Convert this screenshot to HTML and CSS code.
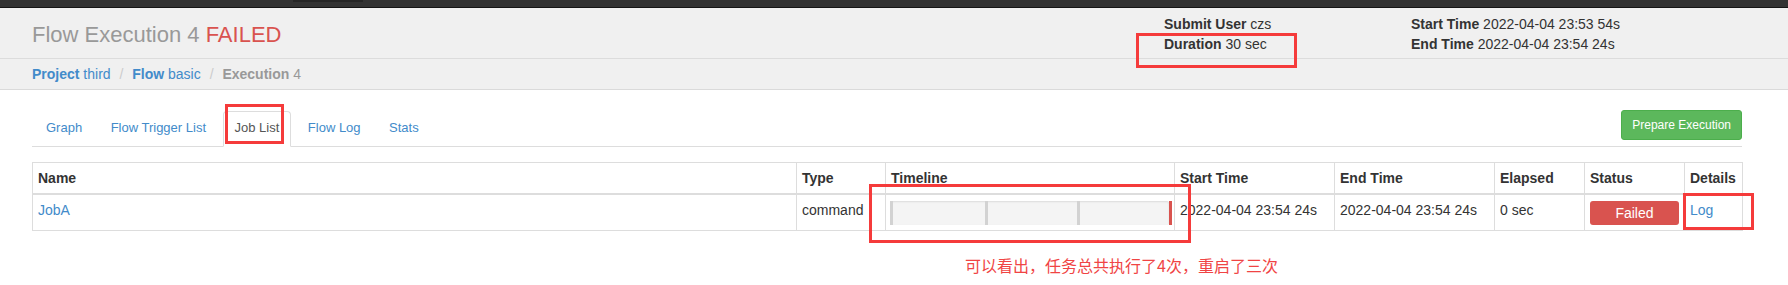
FILE: index.html
```html
<!DOCTYPE html>
<html lang="zh-CN">
<head>
<meta charset="utf-8">
<title>Flow Execution 4</title>
<link rel="stylesheet" href="styles.css">
</head>
<body>
<div class="topbar"><span class="topbar-tab"></span></div>
<header class="exec-header">
  <div class="exec-summary">
    <h1 class="exec-title">Flow Execution 4 <span class="status-failed">FAILED</span></h1>
    <div class="info-col info-col-user">
      <div><b>Submit User</b> czs</div>
      <div><b>Duration</b> 30 sec</div>
    </div>
    <div class="info-col info-col-time">
      <div><b>Start Time</b> 2022-04-04 23:53 54s</div>
      <div><b>End Time</b> 2022-04-04 23:54 24s</div>
    </div>
  </div>
  <div class="breadcrumb-bar">
    <ol class="breadcrumb">
      <li><a href="#"><b>Project</b> third</a></li>
      <li><a href="#"><b>Flow</b> basic</a></li>
      <li class="active"><b>Execution</b> 4</li>
    </ol>
  </div>
</header>
<main class="content">
  <div class="tab-row">
    <ul class="nav-tabs">
      <li><a href="#">Graph</a></li>
      <li><a href="#">Flow Trigger List</a></li>
      <li class="active"><a href="#">Job List</a></li>
      <li><a href="#">Flow Log</a></li>
      <li><a href="#">Stats</a></li>
    </ul>
    <button class="btn-success">Prepare Execution</button>
  </div>
  <table class="job-table">
    <colgroup>
      <col class="c-name"><col class="c-type"><col class="c-timeline"><col class="c-start"><col class="c-end"><col class="c-elapsed"><col class="c-status"><col class="c-details">
    </colgroup>
    <thead>
      <tr><th>Name</th><th>Type</th><th>Timeline</th><th>Start Time</th><th>End Time</th><th>Elapsed</th><th>Status</th><th>Details</th></tr>
    </thead>
    <tbody>
      <tr>
        <td><a href="#">JobA</a></td>
        <td>command</td>
        <td>
          <div class="timeline">
            <span class="attempt" style="left:0%"></span>
            <span class="attempt" style="left:34.2%"></span>
            <span class="attempt" style="left:67.1%"></span>
            <span class="attempt attempt-failed" style="left:100%"></span>
          </div>
        </td>
        <td>2022-04-04 23:54 24s</td>
        <td>2022-04-04 23:54 24s</td>
        <td>0 sec</td>
        <td><div class="label-failed">Failed</div></td>
        <td><a href="#">Log</a></td>
      </tr>
    </tbody>
  </table>
</main>
<div class="annotations">
  <div class="mark mark-duration"></div>
  <div class="mark mark-joblist"></div>
  <div class="mark mark-timeline"></div>
  <div class="mark mark-log"></div>
  <div class="note">可以看出，任务总共执行了4次，重启了三次</div>
</div>
</body>
</html>
```

FILE: styles.css
```css
* { box-sizing: border-box; }
html, body { margin: 0; padding: 0; }
body {
  position: relative;
  width: 1788px;
  height: 285px;
  overflow: hidden;
  background: #fff;
  color: #333;
  font-family: "Liberation Sans", Arial, sans-serif;
  font-size: 14px;
  line-height: 20px;
}
a { color: #428bca; text-decoration: none; }

.topbar {
  height: 8px;
  background: #333;
  border-bottom: 1px solid #151515;
  display: flex;
}
.topbar-tab {
  margin-left: 293px;
  width: 70px;
  height: 2px;
  background: #262626;
}

.exec-header {
  background: #f0f0f0;
  border-bottom: 1px solid #dadada;
}
.exec-summary {
  display: flex;
  align-items: flex-start;
  height: 51px;
  padding-left: 32px;
  border-bottom: 1px solid #dcdcdc;
}
.exec-title {
  flex: 1;
  margin: 15px 0 0;
  font-size: 22px;
  line-height: 24px;
  font-weight: normal;
  color: #999;
}
.status-failed { color: #d9534f; }
.info-col { margin-top: 6px; }
.info-col-user { width: 247px; }
.info-col-time { width: 377px; }

.breadcrumb-bar {
  height: 30px;
  padding: 5px 0 0 32px;
}
.breadcrumb {
  list-style: none;
  margin: 0;
  padding: 0;
}
.breadcrumb li { display: inline-block; }
.breadcrumb li + li::before {
  content: "/\00a0";
  padding: 0 5px;
  color: #ccc;
}
.breadcrumb .active { color: #999; }

.content { padding: 20px 46px 0 32px; }

.tab-row {
  display: flex;
  align-items: flex-start;
  border-bottom: 1px solid #ddd;
}
.nav-tabs {
  display: flex;
  gap: 4.5px;
  list-style: none;
  margin: 1px 0 -1px 2px;
  padding: 0;
  font-size: 13px;
  line-height: 18px;
}
.nav-tabs li a {
  display: block;
  padding: 7px 11px 9px;
  border: 1px solid transparent;
  border-radius: 4px 4px 0 0;
}
.nav-tabs li.active a {
  color: #555;
  background: #fff;
  border-color: #ddd #ddd transparent;
}
.btn-success {
  margin-left: auto;
  height: 30px;
  padding: 5px 10px;
  font-family: inherit;
  font-size: 12px;
  line-height: 18px;
  color: #fff;
  background: #5cb85c;
  border: 1px solid #4cae4c;
  border-radius: 3px;
}

.job-table {
  width: 100%;
  margin-top: 15px;
  table-layout: fixed;
  border-collapse: collapse;
  border: 1px solid #ddd;
}
.c-name { width: 764px; }
.c-type { width: 89px; }
.c-timeline { width: 289px; }
.c-start { width: 160px; }
.c-end { width: 160px; }
.c-elapsed { width: 90px; }
.c-status { width: 100px; }
.c-details { width: 58px; }
.job-table th, .job-table td {
  padding: 5px;
  border: 1px solid #ddd;
  text-align: left;
  vertical-align: top;
  white-space: nowrap;
}
.job-table thead th { border-bottom: 2px solid #ddd; font-weight: bold; }

.timeline {
  position: relative;
  height: 24px;
  margin: 1px 0 0 -1px;
  background: #f4f4f4;
  border-radius: 2px;
  box-shadow: inset 0 1px 2px rgba(0, 0, 0, 0.1);
}
.attempt {
  position: absolute;
  top: 0;
  bottom: 0;
  width: 3px;
  background: #d2d2d2;
}
.attempt-failed { background: #d9534f; }

.label-failed {
  height: 24px;
  margin-top: 1px;
  line-height: 24px;
  text-align: center;
  color: #fff;
  background: #d9534f;
  border-radius: 3px;
}

.annotations .mark {
  position: absolute;
  border: 3px solid #f53b3b;
}
.mark-duration { left: 1136px; top: 33px; width: 161px; height: 35px; }
.mark-joblist { left: 225px; top: 104px; width: 59px; height: 40px; }
.mark-timeline { left: 869px; top: 184px; width: 322px; height: 59px; }
.mark-log { left: 1683px; top: 193px; width: 71px; height: 37px; }
.note {
  position: absolute;
  left: 965px;
  top: 257px;
  font-family: "Noto Sans CJK SC", sans-serif;
  font-size: 16px;
  line-height: 16px;
  color: #f04444;
  white-space: nowrap;
}
```
